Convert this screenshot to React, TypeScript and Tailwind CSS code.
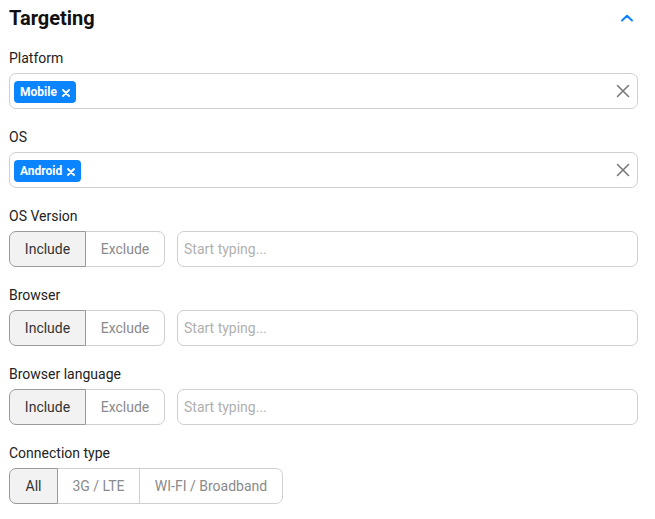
import { useState } from 'react'

function Tag({ label }: { label: string }) {
  return (
    <span className="inline-flex items-center gap-[5px] h-[22px] px-[6px] rounded-[4px] bg-[#0a84ff] text-white text-[12px] font-bold leading-none">
      {label}
      <svg width="8" height="8" viewBox="0 0 8 8" className="mt-[1px]">
        <path d="M1 1L7 7M7 1L1 7" stroke="white" strokeWidth="1.8" strokeLinecap="round" />
      </svg>
    </span>
  )
}

function TagInput({ tag }: { tag: string }) {
  return (
    <div className="flex items-center h-9 border border-[#cfcfcf] rounded-[7px] pl-[4px] pr-[7px]">
      <div className="flex-1">
        <Tag label={tag} />
      </div>
      <svg width="14" height="14" viewBox="0 0 14 14">
        <path d="M1.5 1.5L12.5 12.5M12.5 1.5L1.5 12.5" stroke="#7a7a7a" strokeWidth="1.6" strokeLinecap="round" />
      </svg>
    </div>
  )
}

function Segmented({ options, widths }: { options: string[]; widths: string[] }) {
  const [active, setActive] = useState(0)
  return (
    <div className="flex h-9 shrink-0">
      {options.map((o, i) => {
        const first = i === 0
        const last = i === options.length - 1
        const on = i === active
        return (
          <button
            key={o}
            onClick={() => setActive(i)}
            className={
              widths[i] +
              ' h-9 text-[14px] border ' +
              (first ? 'rounded-l-[7px] ' : '-ml-px ') +
              (last ? 'rounded-r-[7px] ' : '') +
              (on
                ? 'bg-[#f2f2f2] border-[#9a9a9a] text-[#333] z-10 relative'
                : 'bg-white border-[#cfcfcf] text-[#8a8a8a]')
            }
          >
            {o}
          </button>
        )
      })}
    </div>
  )
}

function Field({ label, children }: { label: string; children: React.ReactNode }) {
  return (
    <div>
      <div className="h-5 leading-5 text-[14px] text-[#222] mb-[5px]">{label}</div>
      {children}
    </div>
  )
}

function IncludeRow() {
  return (
    <div className="flex gap-3">
      <Segmented options={['Include', 'Exclude']} widths={['w-[77px]', 'w-[80px]']} />
      <input
        placeholder="Start typing..."
        className="flex-1 h-9 border border-[#cfcfcf] rounded-[7px] px-[6px] text-[14px] placeholder:text-[#b0b0b0] outline-none"
      />
    </div>
  )
}

export default function App() {
  return (
    <div className="w-[655px] h-[519px] bg-white pl-[9px] pr-[17px] pt-[4px]" style={{ fontFamily: 'Roboto, "Liberation Sans", sans-serif' }}>
      <div className="flex items-center justify-between h-7 mb-[16px]">
        <h1 className="text-[20px] font-bold text-[#111]">Targeting</h1>
        <svg width="14" height="8" viewBox="0 0 14 8" className="mr-[4px]">
          <path d="M2 6.5L7 1.8L12 6.5" fill="none" stroke="#0a84ff" strokeWidth="2" strokeLinecap="round" strokeLinejoin="round" />
        </svg>
      </div>

      <div className="flex flex-col gap-[18px]">
        <Field label="Platform">
          <TagInput tag="Mobile" />
        </Field>
        <Field label="OS">
          <TagInput tag="Android" />
        </Field>
        <Field label="OS Version">
          <IncludeRow />
        </Field>
        <Field label="Browser">
          <IncludeRow />
        </Field>
        <Field label="Browser language">
          <IncludeRow />
        </Field>
        <Field label="Connection type">
          <Segmented options={['All', '3G / LTE', 'WI-FI / Broadband']} widths={['w-[49px]', 'w-[83px]', 'w-[144px]']} />
        </Field>
      </div>
    </div>
  )
}
